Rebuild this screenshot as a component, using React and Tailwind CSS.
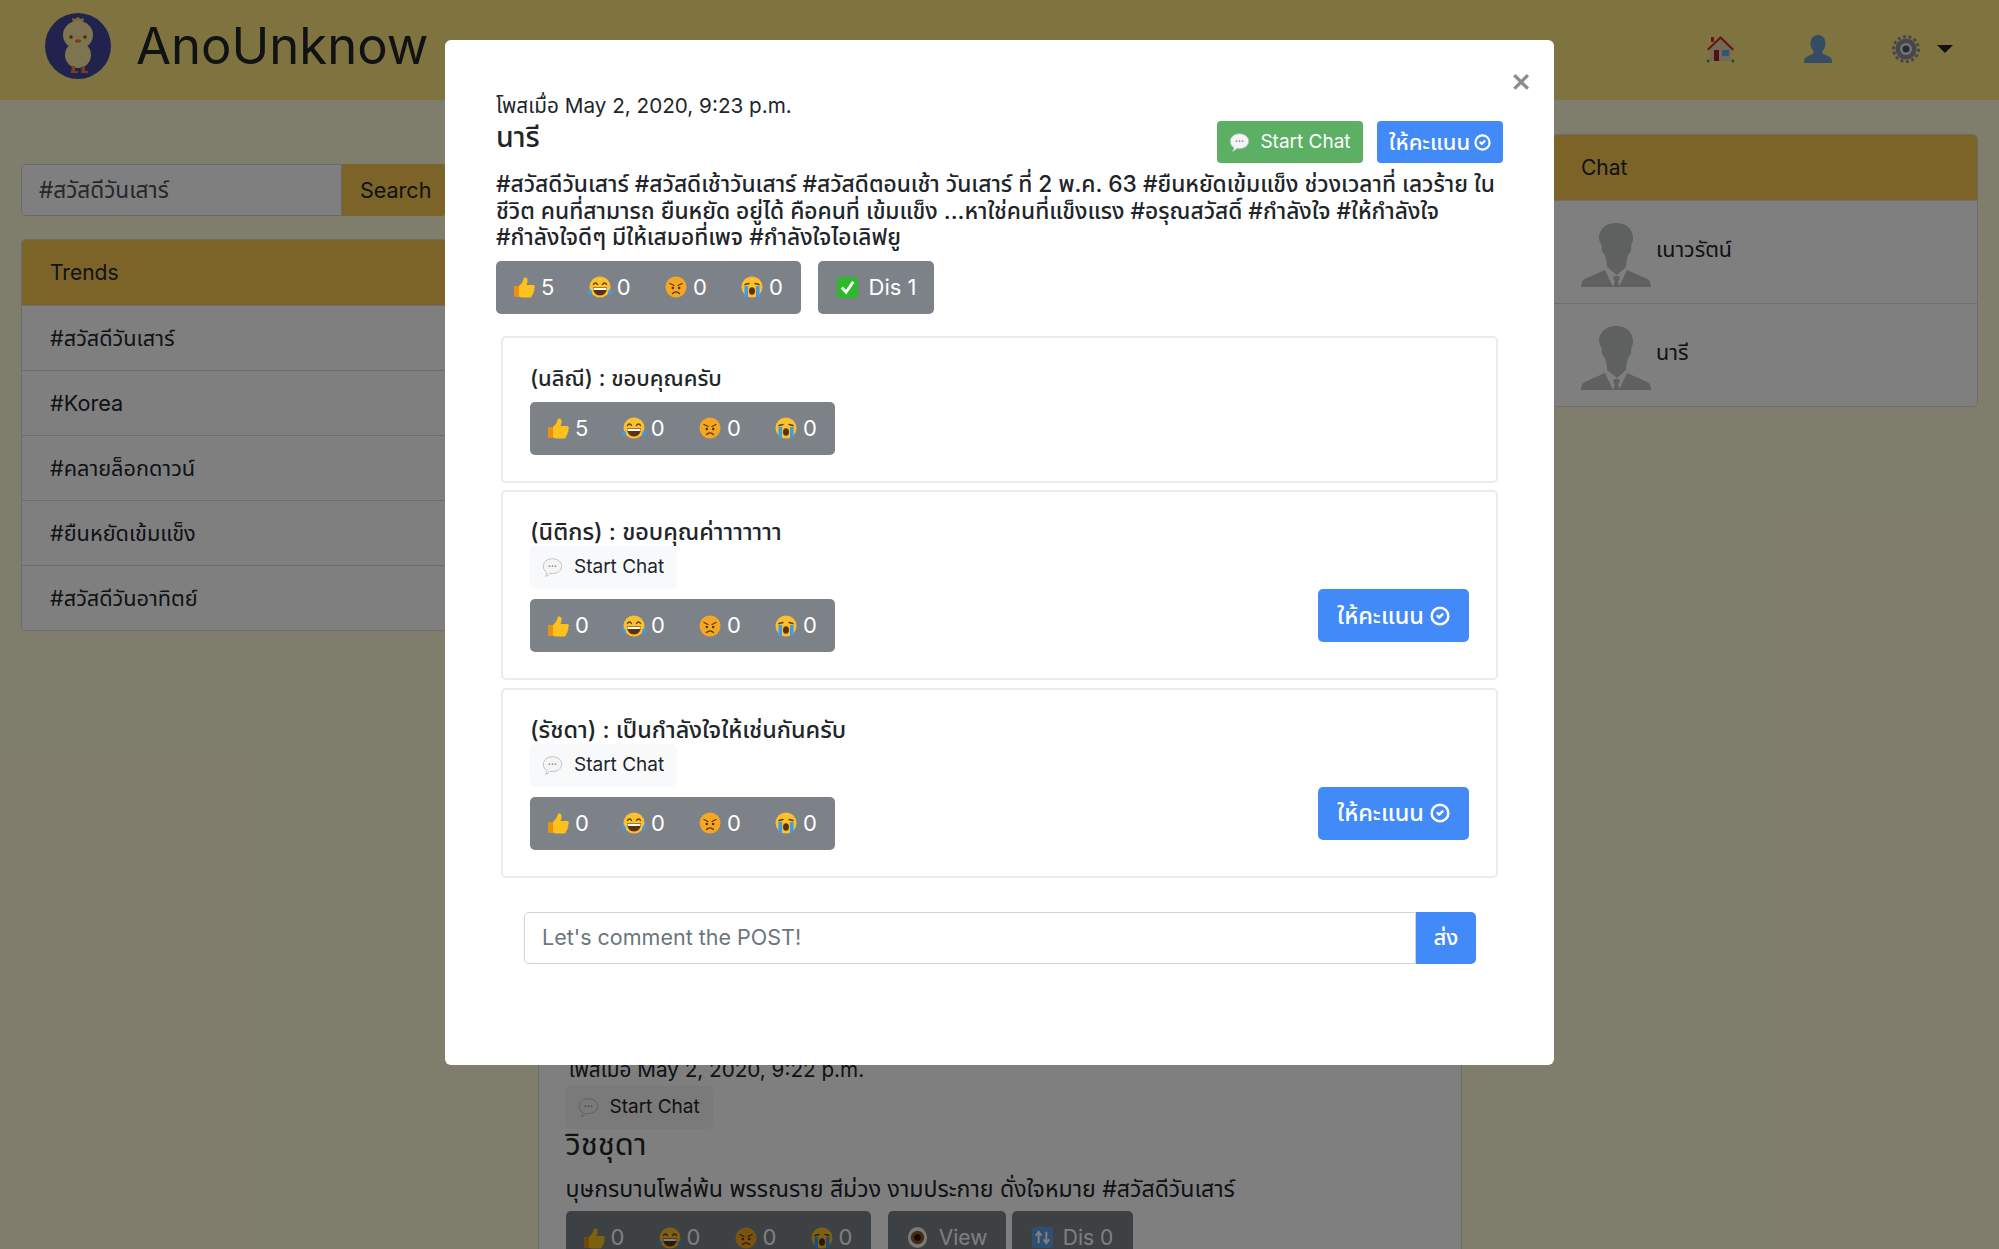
import { CheckCircle2 } from "lucide-react";

const trends = ["#สวัสดีวันเสาร์", "#Korea", "#คลายล็อกดาวน์", "#ยืนหยัดเข้มแข็ง", "#สวัสดีวันอาทิตย์"];

function Face({ kind, size = 24 }) {
  if (kind === "like") {
    return (
      <svg width={size} height={size} viewBox="0 0 24 24" className="shrink-0">
        <path d="M2 11h5v11H3.500A1.500 1.500 0 0 1 2 20.500z" fill="#e8920f" />
        <path d="M7 11c2-2 4-4 4.500-7 .3-2 3.500-2 4 .5.400 2-.5 4-1 5.500h6.500c2 0 2.500 2.500 1 3.500 1 1.200.5 2.700-.7 3.300.7 1.200 0 2.700-1.200 3 .3 1.500-.7 2.700-2.100 2.700H11c-1.800 0-3-.5-4-1z" fill="#fcc21b" />
      </svg>
    );
  }
  if (kind === "laugh") {
    return (
      <svg width={size} height={size} viewBox="0 0 24 24" className="shrink-0">
        <circle cx="12" cy="12" r="10.500" fill="#fbc02d" />
        <path d="M5.500 9.500c1-2 3-2 4 0M14.500 9.500c1-2 3-2 4 0" stroke="#5d3a12" strokeWidth="1.300" fill="none" strokeLinecap="round" />
        <path d="M5 12.500h14c0 4.500-3 8-7 8s-7-3.500-7-8z" fill="#5d3012" />
        <path d="M5.500 13h13v2H5.500z" fill="#fff" />
        <path d="M1 14c2 .5 3 2 3 3.500a2 2 0 0 1-4 0c0-1 .5-2.500 1-3.500zM23 14c-2 .5-3 2-3 3.500a2 2 0 0 0 4 0c0-1-.5-2.500-1-3.500z" fill="#3d9be9" />
      </svg>
    );
  }
  if (kind === "angry") {
    return (
      <svg width={size} height={size} viewBox="0 0 24 24" className="shrink-0">
        <circle cx="12" cy="12" r="10.500" fill="#f5a623" />
        <path d="M6 8.500l4 2M18 8.500l-4 2" stroke="#5d3a12" strokeWidth="1.200" strokeLinecap="round" />
        <circle cx="8.800" cy="13" r="1.200" fill="#4a2c10" />
        <circle cx="15.200" cy="13" r="1.200" fill="#4a2c10" />
        <path d="M8.500 18.500c2-2 5-2 7 0" stroke="#5d3a12" strokeWidth="1.300" fill="none" strokeLinecap="round" />
      </svg>
    );
  }
  return (
    <svg width={size} height={size} viewBox="0 0 24 24" className="shrink-0">
      <circle cx="12" cy="12" r="10.500" fill="#fbc02d" />
      <path d="M5 9.500l4-1M19 9.500l-4-1" stroke="#5d3a12" strokeWidth="1.300" strokeLinecap="round" />
      <path d="M4.500 11h3.500v11H4.500zM16 11h3.500v11H16z" fill="#3d9be9" />
      <ellipse cx="12" cy="16" rx="3" ry="3.800" fill="#5d3012" />
    </svg>
  );
}

function Bubble({ size = 21 }) {
  return (
    <svg width={size} height={size} viewBox="0 0 24 24" className="shrink-0">
      <path d="M12 2c6 0 10.500 3.700 10.500 8.500S18 19 12 19c-1 0-2-.1-3-.3-1 1.500-3 3-5 3.300 1-1.200 1.500-2.500 1.500-4.200C3 16.300 1.500 13.600 1.500 10.500 1.500 5.700 6 2 12 2z" fill="#f4f4f4" stroke="#b8bcc0" strokeWidth="1" />
      <circle cx="8.500" cy="10.500" r="1" fill="#8d9297" />
      <circle cx="12" cy="10.500" r="1" fill="#8d9297" />
      <circle cx="15.500" cy="10.500" r="1" fill="#8d9297" />
    </svg>
  );
}

function Reactions({ like = 0 }) {
  return (
    <div className="flex h-[53px] w-[305px] items-center justify-between rounded-[5px] bg-[#7d8289] pl-[16px] pr-[18px] text-[22px] text-white">
      {[["like", like], ["laugh", 0], ["angry", 0], ["cry", 0]].map(([k, n]) => (
        <span key={k} className="flex items-center gap-[5px]">
          <Face kind={k} />
          {n}
        </span>
      ))}
    </div>
  );
}

function RateButton({ small }) {
  return (
    <button
      className={
        small
          ? "flex h-[42px] w-[126px] items-center justify-center gap-[4px] rounded-[4px] bg-[#428af8] text-[22px] font-medium text-white"
          : "flex h-[53px] w-[151px] items-center justify-center gap-[6px] rounded-[5px] bg-[#428af8] text-[23.500px] font-medium text-white"
      }
    >
      ให้คะแนน
      <CheckCircle2 size={small ? 17 : 20} strokeWidth={3} />
    </button>
  );
}

function LightChat({ dim }) {
  return (
    <button
      className={`flex h-[43px] w-[147px] items-center gap-[11px] rounded-[5px] pl-[12px] text-[19px] text-[#212529] ${dim ? "bg-[#f4f4f4]" : "bg-[#f8f9fa]"}`}
    >
      <Bubble />
      Start Chat
    </button>
  );
}

function Comment({ text, chat, like = 0 }) {
  return (
    <div className="flex justify-between rounded-[5px] border-2 border-[#ebebeb] px-[27px] pt-[27px] pb-[26px]">
      <div>
        <div className={`leading-[26px] font-medium text-[#212529] ${chat ? "text-[23.400px]" : "text-[22px]"}`}>{text}</div>
        {chat && <div className="mt-[1px]"><LightChat /></div>}
        <div className={chat ? "mt-[10px]" : "mt-[11px]"}>
          <Reactions like={like} />
        </div>
      </div>
      {chat && <div className="mb-[10px] self-end"><RateButton /></div>}
    </div>
  );
}

function Avatar() {
  return (
    <svg width="72" height="64" viewBox="0 0 72 64" className="shrink-0">
      <path d="M35 0c10 0 17 6 17 15 0 3-1 6-2 8 1 3 0 6-3 9-1 4-2 8-2 12l-9 8-10-8c0-4-1-8-2-12-3-3-4-6-3-9-1-2-3-5-3-8C18 6 25 0 35 0z" fill="#bfc0c0" />
      <path d="M0 64c0-5 2-8 6-9l18-8 8 17zM70 64c0-5-2-8-6-9l-18-8-8 17z" fill="#bfc0c0" />
      <path d="M33 53h5l1 3-2 2 2 6h-7l2-6-2-2z" fill="#bfc0c0" />
    </svg>
  );
}

function Logo() {
  return (
    <svg width="66" height="66" viewBox="0 0 66 66" className="shrink-0">
      <circle cx="33" cy="33" r="33" fill="#44449c" />
      <path d="M27 5l3 1 3-2 3 2 3-1-1 5H28z" fill="#ffd060" />
      <ellipse cx="33" cy="22" rx="15" ry="14" fill="#ffe9a0" />
      <ellipse cx="33" cy="42" rx="13" ry="13" fill="#ffe9a0" />
      <circle cx="26" cy="24" r="1.800" fill="#a05020" />
      <circle cx="40" cy="24" r="1.800" fill="#a05020" />
      <ellipse cx="33" cy="28" rx="3.200" ry="1.800" fill="#f08030" />
      <path d="M27 53h3v5h3v2h-7zM37 53h3v5h3v2h-7z" fill="#f08030" />
    </svg>
  );
}

function House() {
  return (
    <svg width="27" height="28" viewBox="0 0 27 28">
      <path d="M3 13L13.500 3 24 13v13H3z" fill="#e6d2b0" />
      <path d="M0 14L13.500 1 27 14l-1.500 1.500L13.500 4 1.500 15.500zM4 2h3v5H4z" fill="#c83030" />
      <path d="M7 15h5v11H7z" fill="#a02020" />
      <path d="M15 15h7v6h-7z" fill="#5fb0f0" />
      <circle cx="1" cy="26" r="1.500" fill="#30a030" />
      <circle cx="26" cy="26" r="1.500" fill="#30a030" />
    </svg>
  );
}

function Bust() {
  return (
    <svg width="28" height="28" viewBox="0 0 28 28">
      <path d="M14 0c5 0 7.500 4 7.500 8.500 0 3-1.200 6-3 7.500v2.500L26 22c1.500 1 2 3 2 6H0c0-3 .5-5 2-6l7.500-3.500V16c-1.800-1.500-3-4.500-3-7.500C6.500 4 9 0 14 0z" fill="#6a99c8" />
    </svg>
  );
}

function Gear() {
  return (
    <svg width="28" height="28" viewBox="0 0 28 28">
      <circle cx="14" cy="14" r="12.500" fill="none" stroke="#8b8f99" strokeWidth="3" strokeDasharray="3 2.550" />
      <circle cx="14" cy="14" r="10.500" fill="#8b8f99" />
      <circle cx="14" cy="14" r="6" fill="#e8e8e8" />
      <circle cx="14" cy="14" r="3.500" fill="#505560" />
    </svg>
  );
}

export default function App() {
  return (
    <div className="relative h-[1249px] overflow-hidden bg-[#fffad8] [font-family:Inter,'Noto_Sans_Thai','Noto_Sans',sans-serif] text-[#212529]">
      {/* Navbar */}
      <div className="flex h-[100px] items-center justify-between bg-[#ffe680] pb-[8px] pl-[45px] pr-[46px]">
        <div className="flex items-center gap-[25px]">
          <Logo />
          <span className="text-[50.800px] leading-none">AnoUnknow</span>
        </div>
        <div className="flex items-center pt-[5px]">
          <House />
          <span className="ml-[70px]"><Bust /></span>
          <span className="ml-[60px]"><Gear /></span>
          <span className="ml-[17px] h-0 w-0 border-x-[8px] border-t-[8px] border-x-transparent border-t-[#212529]" />
        </div>
      </div>

      {/* Page columns */}
      <div className="grid grid-cols-[426px_924px_426px] justify-between px-[21px]">
        <div className="pt-[64px]">
          <div className="flex h-[52px]">
            <div className="flex flex-1 items-center rounded-l-[5px] border border-[#ced4da] bg-white pl-[17px] text-[22.600px] text-[#495057]">#สวัสดีวันเสาร์</div>
            <button className="w-[105px] rounded-r-[5px] bg-[#f8c852] pl-[18px] text-left text-[21.500px]">Search</button>
          </div>
          <div className="mt-[23px] overflow-hidden rounded-[5px] border border-black/15 bg-white">
            <div className="flex h-[65px] items-center bg-[#f8c852] pl-[28px] text-[21px]">Trends</div>
            {trends.map((t) => (
              <div key={t} className="flex h-[65px] items-center border-t border-black/15 pl-[28px] text-[21.700px]">{t}</div>
            ))}
          </div>
        </div>

        <div className="pt-[34px]">
          <div className="h-[1200px] rounded-[5px] border border-black/15 bg-white pl-[27px] pr-[27px] pt-[924px]">
            <div className="pl-[3px] text-[20.700px] leading-[22px]">โพสเมื่อ May 2, 2020, 9:22 p.m.</div>
            <div className="mt-[5px]"><LightChat dim /></div>
            <div className="mt-[-4px] text-[31px] leading-[38px]">วิชชุดา</div>
            <div className="mt-[11px] text-[23.100px] leading-[30px]">บุษกรบานโพล่พ้น พรรณราย สีม่วง งามประกาย ดั่งใจหมาย #สวัสดีวันเสาร์</div>
            <div className="mt-[7px] flex">
              <Reactions />
              <div className="ml-[17px] flex h-[53px] w-[118px] items-center justify-center gap-[10px] rounded-[5px] bg-[#7d8289] text-[21px] text-white">
                <svg width="23" height="23" viewBox="0 0 24 24">
                  <ellipse cx="12" cy="12" rx="10" ry="11" fill="#f2f2f2" />
                  <circle cx="12" cy="12" r="7" fill="#8a5a20" />
                  <circle cx="12" cy="12" r="3.500" fill="#201008" />
                </svg>
                View
              </div>
              <div className="ml-[6px] flex h-[53px] w-[121px] items-center justify-center gap-[9px] rounded-[5px] bg-[#7d8289] text-[21px] text-white">
                <svg width="23" height="23" viewBox="0 0 24 24">
                  <rect x="1" y="1" width="22" height="22" rx="3" fill="#5f9fe0" />
                  <path d="M8 18V7M5 10l3-4 3 4M16 6v11M13 14l3 4 3-4" stroke="#fff" strokeWidth="2" fill="none" />
                </svg>
                Dis 0
              </div>
            </div>
          </div>
        </div>

        <div className="pt-[34px]">
          <div className="overflow-hidden rounded-[5px] border border-black/15 bg-white">
            <div className="flex h-[65px] items-center bg-[#f8c852] pl-[28px] text-[21px]">Chat</div>
            {["เนาวรัตน์", "นารี"].map((n) => (
              <div key={n} className="flex h-[103px] gap-[3px] border-t border-black/15 pl-[28px] pt-[22px]">
                <Avatar />
                <span className="mt-[12px] text-[21.500px] leading-[28px]">{n}</span>
              </div>
            ))}
          </div>
        </div>
      </div>

      {/* Modal */}
      <div className="absolute inset-0 bg-black/50">
        <div className="relative mx-auto mt-[40px] h-[1025px] w-[1109px] rounded-[6px] bg-white px-[51px] pt-[51px]">
          <span className="absolute right-[22px] top-[19px] text-[33px] leading-[40px] font-medium text-[#8b8b8b]">×</span>
          <div className="flex h-[72px] items-end justify-between">
            <div className="self-start">
              <div className="text-[20.700px] leading-[30px]">โพสเมื่อ May 2, 2020, 9:23 p.m.</div>
              <div className="text-[28.500px] leading-[32px] font-medium">นารี</div>
            </div>
            <div className="flex gap-[14px]">
              <button className="flex h-[42px] w-[146px] items-center justify-center gap-[10px] rounded-[4px] bg-[#5cb064] text-[19px] text-white">
                <Bubble />
                Start Chat
              </button>
              <RateButton small />
            </div>
          </div>
          <div className="mt-[8px] text-[22.750px] leading-[26.500px] font-medium">
            #สวัสดีวันเสาร์ #สวัสดีเช้าวันเสาร์ #สวัสดีตอนเช้า วันเสาร์ ที่ 2 พ.ค. 63 #ยืนหยัดเข้มแข็ง ช่วงเวลาที่ เลวร้าย ใน
            <br />
            ชีวิต คนที่สามารถ ยืนหยัด อยู่ได้ คือคนที่ เข้มแข็ง ...หาใช่คนที่แข็งแรง #อรุณสวัสดิ์ #กำลังใจ #ให้กำลังใจ
            <br />
            #กำลังใจดีๆ มีให้เสมอที่เพจ #กำลังใจไอเลิฟยู
          </div>
          <div className="mt-[10px] flex gap-[17px]">
            <Reactions like={5} />
            <div className="flex h-[53px] w-[116px] items-center justify-center gap-[10px] rounded-[5px] bg-[#7d8289] text-[22px] text-white">
              <svg width="23" height="23" viewBox="0 0 24 24">
                <rect x="1" y="1" width="22" height="22" rx="3" fill="#2eb82e" />
                <path d="M6 12l4.500 5L18 6" stroke="#fff" strokeWidth="3" fill="none" />
              </svg>
              Dis 1
            </div>
          </div>

          <div className="mt-[22px] mr-[5px] ml-[5px] flex flex-col gap-[7.500px]">
            <Comment text="(นลิณี) : ขอบคุณครับ" like={5} />
            <Comment text="(นิติกร) : ขอบคุณค่าาาาาาา" chat />
            <Comment text="(รัชดา) : เป็นกำลังใจให้เช่นกันครับ" chat />
          </div>

          <div className="mt-[34px] ml-[28px] mr-[27px] flex h-[52px]">
            <div className="flex flex-1 items-center rounded-l-[5px] border border-[#ced4da] pl-[17px] text-[21.500px] text-[#6c757d]">Let's comment the POST!</div>
            <button className="w-[60px] rounded-r-[5px] bg-[#428af8] text-[22px] font-medium text-white">ส่ง</button>
          </div>
        </div>
      </div>
    </div>
  );
}
